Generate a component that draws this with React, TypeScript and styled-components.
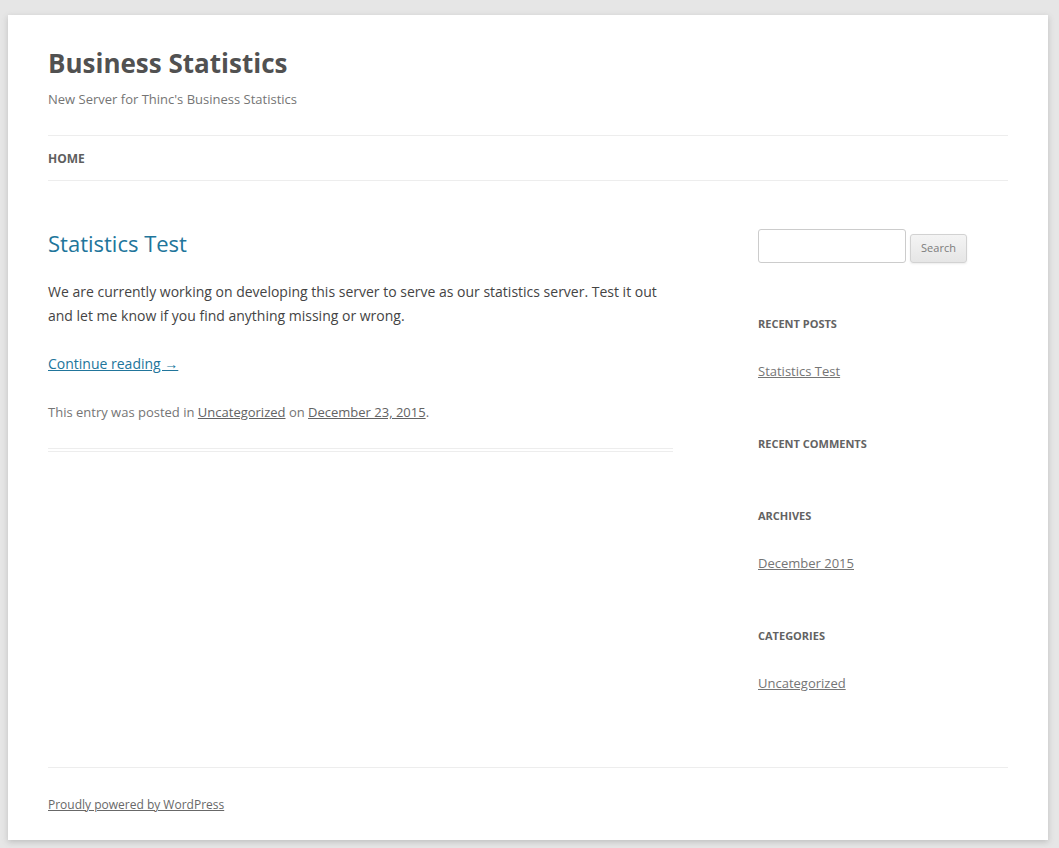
import React from "react";
import styled, { createGlobalStyle } from "styled-components";

const Global = createGlobalStyle`
  html, body { margin: 0; padding: 0; background: #e6e6e6; }
  body { font-family: "Open Sans", "Liberation Sans", sans-serif; color: #444; }
  * { box-sizing: border-box; }
`;

const Page = styled.div`
  padding: 15px 0 8px 8px;
`;

const Site = styled.div`
  width: 1040px;
  background: #fff;
  padding: 0 40px;
  box-shadow: 0 2px 6px rgba(100, 100, 100, 0.3);
`;

const Header = styled.header`
  padding: 24px 0;
`;

const SiteTitle = styled.h1`
  margin: 0;
  font-size: 26px;
  line-height: 48px;
  font-weight: 700;
  color: #515151;
`;

const Tagline = styled.h2`
  margin: 0;
  font-size: 13px;
  line-height: 24px;
  font-weight: 400;
  color: #757575;
`;

const Nav = styled.nav`
  margin-top: 24px;
  border-top: 1px solid #ededed;
  border-bottom: 1px solid #ededed;
  display: flex;
  padding-top: 1px;
`;

const NavItem = styled.a`
  font-size: 12px;
  line-height: 43px;
  font-weight: 700;
  text-transform: uppercase;
  color: #5e5e5e;
  text-decoration: none;
`;

const Main = styled.div`
  display: flex;
  justify-content: space-between;
  align-items: flex-start;
  padding: 24px 0;
`;

const Content = styled.main`
  width: 625px;
`;

const Article = styled.article`
  padding-bottom: 24px;
  border-bottom: 4px double #ededed;
`;

const EntryTitle = styled.h1`
  margin: 0 0 23px;
  font-size: 22px;
  line-height: 28px;
  font-weight: 400;
  a {
    color: #21759b;
    text-decoration: none;
  }
`;

const Para = styled.p`
  margin: 0 0 24px;
  font-size: 14px;
  line-height: 24px;
  color: #444;
`;

const BlueLink = styled.a`
  color: #21759b;
  text-decoration: underline;
`;

const EntryMeta = styled.footer`
  font-size: 13px;
  line-height: 24px;
  color: #757575;
  a {
    color: #636363;
    text-decoration: underline;
  }
`;

const Sidebar = styled.aside`
  width: 250px;
`;

const Widget = styled.section`
  margin-bottom: 48px;
`;

const SearchRow = styled.form`
  display: flex;
  align-items: flex-start;
  gap: 4px;
  margin: 0;
  height: 34px;
`;

const SearchInput = styled.input`
  width: 148px;
  height: 34px;
  padding: 6px;
  border: 1px solid #ccc;
  border-radius: 3px;
  font-family: inherit;
  font-size: 13px;
  background: #fff;
`;

const SearchButton = styled.button`
  width: 57px;
  height: 29px;
  margin-top: 5px;
  padding: 0 0 2px;
  font-family: inherit;
  font-size: 11px;
  color: #7c7c7c;
  border: 1px solid #d2d2d2;
  border-radius: 3px;
  background: linear-gradient(to bottom, #f4f4f4, #e6e6e6);
  box-shadow: 0 1px 2px rgba(64, 64, 64, 0.1);
`;

const WidgetTitle = styled.h3`
  margin: 0 0 24px;
  padding-top: 1px;
  font-size: 11px;
  line-height: 23px;
  font-weight: 700;
  text-transform: uppercase;
  color: #636363;
`;

const WidgetList = styled.ul`
  margin: 0;
  padding: 0;
  list-style: none;
`;

const WidgetItem = styled.li`
  font-size: 13px;
  line-height: 24px;
  a {
    color: #757575;
    text-decoration: underline;
  }
`;

const Footer = styled.footer`
  border-top: 1px solid #ededed;
  padding: 25px 0 23px;
  font-size: 12px;
  line-height: 24px;
  a {
    color: #686868;
    text-decoration: underline;
  }
`;

const widgets: { title: string; items: string[] }[] = [
  { title: "Recent Posts", items: ["Statistics Test"] },
  { title: "Recent Comments", items: [] },
  { title: "Archives", items: ["December 2015"] },
  { title: "Categories", items: ["Uncategorized"] },
];

export default function App() {
  return (
    <>
      <Global />
      <Page>
        <Site>
          <Header>
            <SiteTitle>Business Statistics</SiteTitle>
            <Tagline>New Server for Thinc's Business Statistics</Tagline>
            <Nav>
              <NavItem href="#">Home</NavItem>
            </Nav>
          </Header>
          <Main>
            <Content>
              <Article>
                <EntryTitle>
                  <a href="#">Statistics Test</a>
                </EntryTitle>
                <Para>
                  We are currently working on developing this server to serve as our statistics server. Test it out
                  and let me know if you find anything missing or wrong.
                </Para>
                <Para>
                  <BlueLink href="#">Continue reading →</BlueLink>
                </Para>
                <EntryMeta>
                  This entry was posted in <a href="#">Uncategorized</a> on <a href="#">December 23, 2015</a>.
                </EntryMeta>
              </Article>
            </Content>
            <Sidebar>
              <Widget>
                <SearchRow onSubmit={(e) => e.preventDefault()}>
                  <SearchInput type="text" />
                  <SearchButton type="submit">Search</SearchButton>
                </SearchRow>
              </Widget>
              {widgets.map((w) => (
                <Widget key={w.title}>
                  <WidgetTitle>{w.title}</WidgetTitle>
                  <WidgetList>
                    {w.items.map((it) => (
                      <WidgetItem key={it}>
                        <a href="#">{it}</a>
                      </WidgetItem>
                    ))}
                  </WidgetList>
                </Widget>
              ))}
            </Sidebar>
          </Main>
          <Footer>
            <a href="#">Proudly powered by WordPress</a>
          </Footer>
        </Site>
      </Page>
    </>
  );
}
